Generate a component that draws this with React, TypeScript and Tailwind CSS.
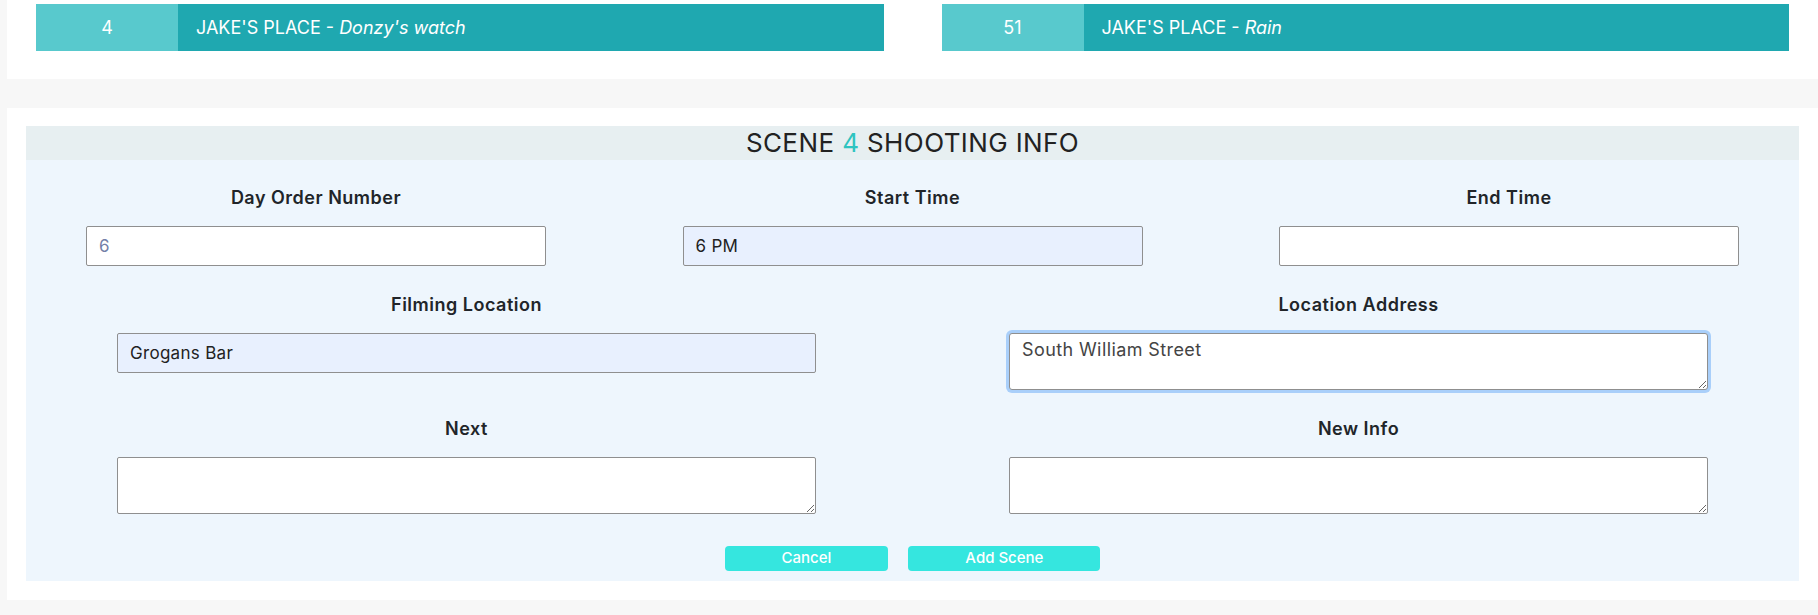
import React from 'react';

interface SceneCard {
  number: string;
  place: string;
  title: string;
}

const cards: SceneCard[] = [
  { number: '4', place: "JAKE'S PLACE", title: "Donzy's watch" },
  { number: '51', place: "JAKE'S PLACE", title: 'Rain' },
];

const inputBase =
  'h-[40px] border border-[#8f8f8f] rounded-[2px] px-[12px] text-[17px] tracking-[0.3px] text-[#222] outline-none';

const textareaBase =
  'h-[57px] w-[699px] border border-[#8f8f8f] rounded-[2px] px-[12px] pt-[2px] text-[18px] tracking-[0.4px] text-[#444] outline-none resize-y bg-white';

const Label: React.FC<{ children: React.ReactNode }> = ({ children }) => (
  <label className="block h-[25px] leading-[25px] text-[18px] tracking-[0.5px] font-semibold text-[#212529] text-center">
    {children}
  </label>
);

const App: React.FC = () => {
  return (
    <div
      className="min-h-screen bg-[#f7f7f7] pl-[7px] overflow-hidden"
      style={{ fontFamily: 'Inter, "Noto Sans", sans-serif' }}
    >
      {/* scene list */}
      <div className="bg-white flex pt-[4px] pb-[28px]">
        {cards.map(card => (
          <div key={card.number} className="w-1/2 px-[29px]">
            <div className="flex h-[47px] bg-[#1fa8b0] text-white text-[18px]">
              <div className="w-[142px] bg-[#58c9cd] flex items-center justify-center">
                {card.number}
              </div>
              <div className="flex items-center pl-[18px]">
                {card.place}&nbsp;-&nbsp;<span className="italic">{card.title}</span>
              </div>
            </div>
          </div>
        ))}
      </div>

      {/* shooting info form */}
      <div className="bg-white mt-[29px] px-[19px] pt-[18px] pb-[19px]">
        <div className="h-[34px] bg-[#e7eff1] text-center text-[26px] tracking-[0.4px] leading-[34px] text-[#222]">
          SCENE <span className="text-[#2ec4c0]">4</span> SHOOTING INFO
        </div>
        <div className="bg-[#eef6fd] pt-[25px] pb-[10px]">
          <div className="flex justify-between px-[60px]">
            <div className="w-[460px]">
              <Label>Day Order Number</Label>
              <input
                className={`${inputBase} w-full mt-[16px] bg-white placeholder:text-[#7380a8]`}
                placeholder="6"
              />
            </div>
            <div className="w-[460px]">
              <Label>Start Time</Label>
              <input className={`${inputBase} w-full mt-[16px] bg-[#e8f0fe]`} defaultValue="6 PM" />
            </div>
            <div className="w-[460px]">
              <Label>End Time</Label>
              <input className={`${inputBase} w-full mt-[16px] bg-white`} />
            </div>
          </div>

          <div className="flex justify-between px-[91px] mt-[26px]">
            <div className="w-[699px]">
              <Label>Filming Location</Label>
              <input className={`${inputBase} w-full mt-[16px] bg-[#e8f0fe]`} defaultValue="Grogans Bar" />
            </div>
            <div className="w-[699px]">
              <Label>Location Address</Label>
              <textarea
                className={`${textareaBase} block mt-[16px] border-[#6aa9f2] rounded-[3px] ring-[3px] ring-[#a9cffa]`}
                defaultValue="South William Street"
              />
            </div>
          </div>

          <div className="flex justify-between px-[91px] mt-[26px]">
            <div className="w-[699px]">
              <Label>Next</Label>
              <textarea className={`${textareaBase} block mt-[16px]`} />
            </div>
            <div className="w-[699px]">
              <Label>New Info</Label>
              <textarea className={`${textareaBase} block mt-[16px]`} />
            </div>
          </div>

          <div className="flex justify-center gap-[20px] mt-[32px]">
            <button className="h-[25px] px-[57px] rounded-[4px] bg-[#35e6df] text-white text-[15px] font-medium">
              Cancel
            </button>
            <button className="h-[25px] px-[57px] rounded-[4px] bg-[#35e6df] text-white text-[15px] font-medium">
              Add Scene
            </button>
          </div>
        </div>
      </div>
    </div>
  );
};

export default App;
